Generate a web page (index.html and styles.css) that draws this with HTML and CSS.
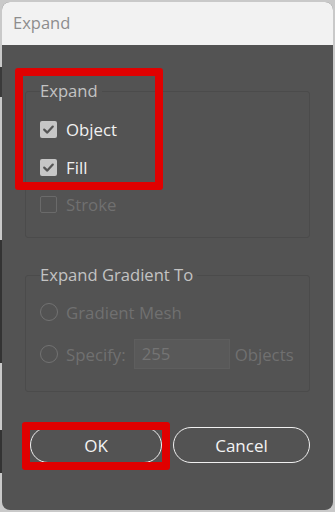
FILE: index.html
```html
<!DOCTYPE html>
<html>
<head>
<meta charset="utf-8">
<link rel="stylesheet" href="styles.css">
</head>
<body>
<div class="dialog">
  <div class="titlebar">Expand</div>
  <div class="content">
    <fieldset class="group group-expand">
      <legend>Expand</legend>
      <div class="row">
        <span class="check on"><svg viewBox="0 0 17 17" width="17" height="17"><path d="M4.2 8.6 L7.3 11.6 L12.8 5.6" fill="none" stroke="#555" stroke-width="2.2" stroke-linecap="round" stroke-linejoin="round"/></svg></span>
        <span class="label">Object</span>
      </div>
      <div class="row">
        <span class="check on"><svg viewBox="0 0 17 17" width="17" height="17"><path d="M4.2 8.6 L7.3 11.6 L12.8 5.6" fill="none" stroke="#555" stroke-width="2.2" stroke-linecap="round" stroke-linejoin="round"/></svg></span>
        <span class="label">Fill</span>
      </div>
      <div class="row disabled">
        <span class="check off"></span>
        <span class="label">Stroke</span>
      </div>
    </fieldset>
    <fieldset class="group group-gradient">
      <legend>Expand Gradient To</legend>
      <div class="row disabled">
        <span class="radio"></span>
        <span class="label">Gradient Mesh</span>
      </div>
      <div class="row disabled">
        <span class="radio"></span>
        <span class="label">Specify:</span>
        <span class="field">255</span>
        <span class="label unit">Objects</span>
      </div>
    </fieldset>
    <div class="buttons">
      <button class="btn ok">OK</button>
      <button class="btn cancel">Cancel</button>
    </div>
  </div>
  <div class="mark mark-group"></div>
  <div class="mark mark-ok"></div>
</div>
</body>
</html>
```

FILE: styles.css
```css
html, body {
  margin: 0;
  padding: 0;
}
body {
  width: 335px;
  height: 512px;
  overflow: hidden;
  background:
    linear-gradient(to bottom,
      transparent 0, transparent 67px, #3a3a3a 67px, #3a3a3a 97px,
      transparent 97px, transparent 240px, #333 240px, #333 363px,
      transparent 363px, transparent 430px, #333 430px, #333 473px,
      transparent 473px) left top / 2px 100% no-repeat,
    #c9c9c9;
  font-family: "Open Sans", "Noto Sans", sans-serif;
}
.dialog {
  position: relative;
  margin: 2px;
  width: 331px;
  height: 508px;
  border-radius: 8px;
  background: #535353;
  overflow: hidden;
  display: flex;
  flex-direction: column;
}
.titlebar {
  height: 43px;
  background: #f2f2f2;
  color: #8d8d8d;
  font-size: 16.5px;
  line-height: 41px;
  padding-left: 11px;
  flex: none;
}
.content {
  padding: 0 23px 0 23px;
  display: flex;
  flex-direction: column;
}
.group {
  margin: 0;
  border: 1px solid #4b4b4b;
  border-radius: 3px;
  padding: 0 0 0 14px;
  min-width: 0;
  box-sizing: border-box;
}
.group legend {
  padding: 0 4px 0 0;
  margin-left: 0;
  color: #c3c3c3;
  font-size: 16.6px;
  line-height: 20px;
}
.group-expand {
  margin-top: 36px;
  height: 157px;
  padding-top: 10px;
}
.group-gradient {
  margin-top: 27px;
  height: 127px;
  padding-top: 6px;
}
.row {
  display: flex;
  align-items: center;
  height: 37.5px;
  color: #f1f1f1;
  font-size: 16.8px;
}
.group-gradient .row {
  height: 42px;
}
.row.disabled {
  color: #707070;
}
.check {
  width: 17px;
  height: 17px;
  border-radius: 2px;
  box-sizing: border-box;
  margin-right: 9px;
  flex: none;
  display: flex;
}
.check.on {
  background: #c6c6c6;
}
.check.off {
  border: 1px solid #6a6a6a;
}
.radio {
  width: 18px;
  height: 18px;
  border-radius: 50%;
  border: 1.5px solid #727272;
  box-sizing: border-box;
  margin-right: 8px;
  flex: none;
}
.field {
  width: 96px;
  height: 30px;
  box-sizing: border-box;
  margin-left: 8px;
  margin-right: 5px;
  background: #595959;
  border: 1px solid #5e5e5e;
  color: #747474;
  padding-left: 7px;
  line-height: 28px;
  font-size: 16.8px;
}
.buttons {
  display: flex;
  gap: 11px;
  margin-top: 35px;
  padding-left: 5px;
}
.btn {
  height: 36px;
  border-radius: 18px;
  border: 1.5px solid #f0f0f0;
  background: transparent;
  color: #f4f4f4;
  font-family: "Open Sans", "Noto Sans", sans-serif;
  font-size: 17px;
  padding: 0;
}
.btn.ok {
  width: 133px;
}
.btn.cancel {
  width: 138px;
}
.mark {
  position: absolute;
  border: 8px solid #e00000;
  border-radius: 3px;
  box-sizing: border-box;
}
.mark-group {
  left: 13px;
  top: 66px;
  width: 148px;
  height: 122px;
}
.mark-ok {
  left: 20px;
  top: 420px;
  width: 148px;
  height: 48px;
}
```
